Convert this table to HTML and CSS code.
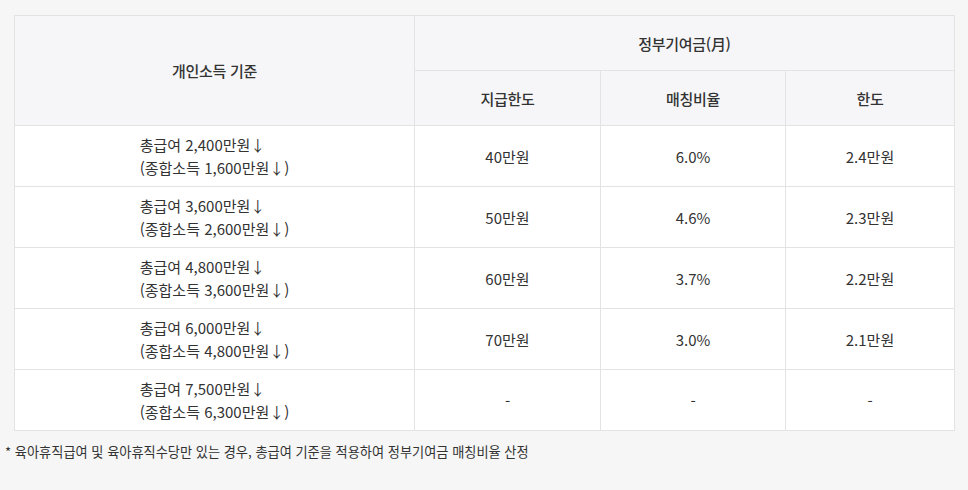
FILE: index.html
```html
<!DOCTYPE html>
<html lang="ko">
<head>
<meta charset="utf-8">
<link rel="stylesheet" href="styles.css">
</head>
<body>
<div class="page">
  <table class="grid">
    <colgroup>
      <col class="c1"><col class="c2"><col class="c3"><col class="c4">
    </colgroup>
    <thead>
      <tr class="hrow">
        <th rowspan="2">개인소득 기준</th>
        <th colspan="3">정부기여금(月)</th>
      </tr>
      <tr class="hrow">
        <th>지급한도</th>
        <th>매칭비율</th>
        <th>한도</th>
      </tr>
    </thead>
    <tbody>
      <tr><td><span class="inc">총급여 2,400만원↓<br>(종합소득 1,600만원↓)</span></td><td>40만원</td><td>6.0%</td><td>2.4만원</td></tr>
      <tr><td><span class="inc">총급여 3,600만원↓<br>(종합소득 2,600만원↓)</span></td><td>50만원</td><td>4.6%</td><td>2.3만원</td></tr>
      <tr><td><span class="inc">총급여 4,800만원↓<br>(종합소득 3,600만원↓)</span></td><td>60만원</td><td>3.7%</td><td>2.2만원</td></tr>
      <tr><td><span class="inc">총급여 6,000만원↓<br>(종합소득 4,800만원↓)</span></td><td>70만원</td><td>3.0%</td><td>2.1만원</td></tr>
      <tr><td><span class="inc">총급여 7,500만원↓<br>(종합소득 6,300만원↓)</span></td><td>-</td><td>-</td><td>-</td></tr>
    </tbody>
  </table>
  <p class="note">* 육아휴직급여 및 육아휴직수당만 있는 경우, 총급여 기준을 적용하여 정부기여금 매칭비율 산정</p>
</div>
</body>
</html>
```

FILE: styles.css
```css
html, body {
  margin: 0;
  padding: 0;
  background: #f6f6f6;
}
body {
  font-family: "Noto Sans CJK KR", "Noto Sans", sans-serif;
  color: #333;
}
.page {
  padding-top: 15px;
}
.grid {
  margin-left: 14px;
  width: 940px;
  border-collapse: collapse;
  table-layout: fixed;
  background: #fff;
  border: 1px solid #e3e3e3;
}
.c1 { width: 400px; }
.c2 { width: 186px; }
.c3 { width: 185px; }
.c4 { width: 169px; }
.grid th, .grid td {
  border: 1px solid #e3e3e3;
  text-align: center;
  vertical-align: middle;
  padding: 0;
  font-size: 15px;
}
.grid th {
  background: #f6f6f8;
  font-weight: 500;
  height: 54px;
  letter-spacing: -0.3px;
}
.grid td {
  height: 60px;
  font-weight: 400;
  line-height: 23px;
}
.inc {
  display: inline-block;
  text-align: left;
}
.note {
  margin: 8px 0 0 0;
  padding-left: 5px;
  font-size: 13.2px;
  line-height: 26px;
  color: #333;
}
```
